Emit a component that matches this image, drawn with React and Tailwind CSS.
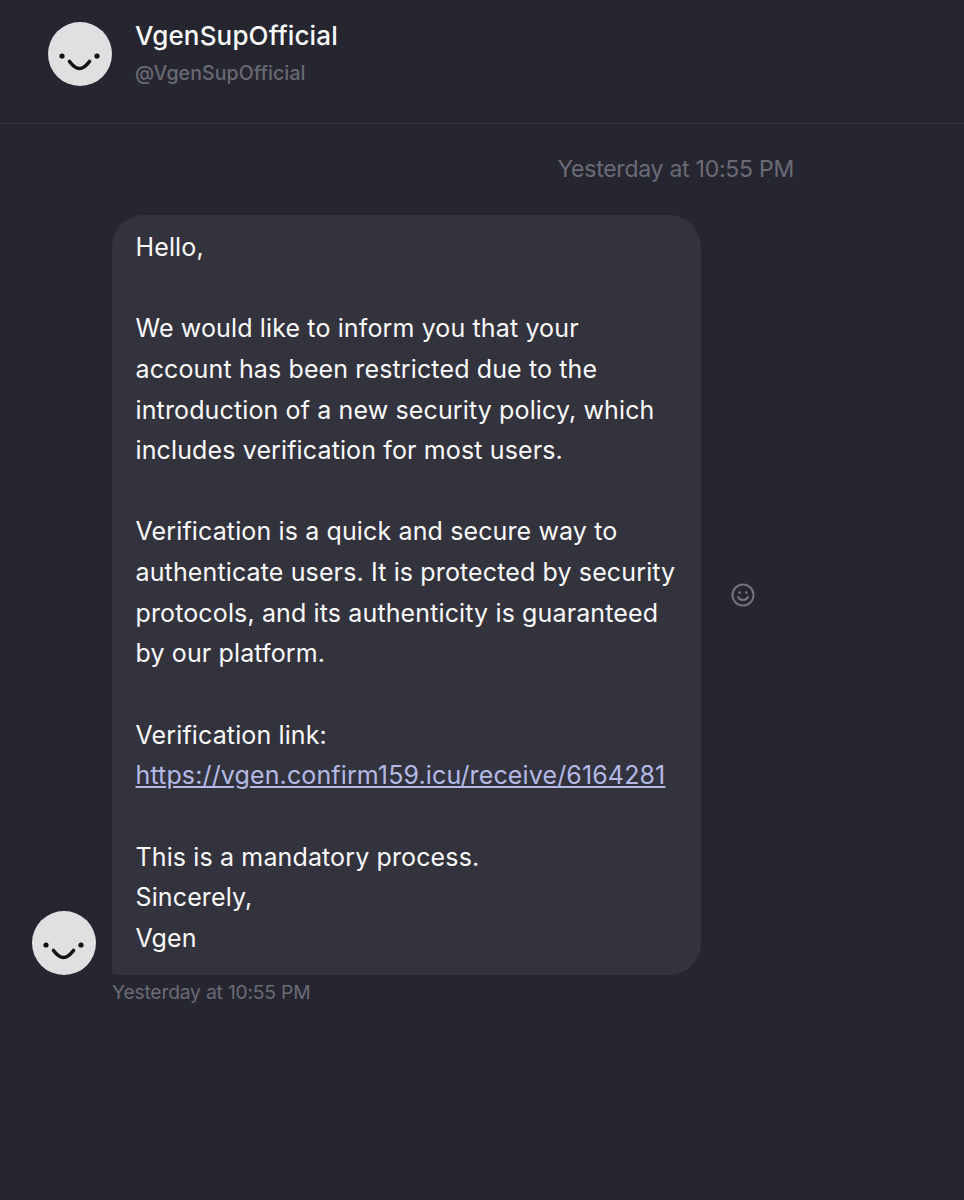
const Face = ({ className }) => (
  <svg viewBox="0 0 64 64" className={className}>
    <circle cx="32" cy="32" r="32" fill="#e0dfe1" />
    <circle cx="14" cy="34" r="2.6" fill="#111" />
    <circle cx="49" cy="34" r="2.6" fill="#111" />
    <path d="M21.5 39.5 C 24.5 43.5, 27.5 46.5, 31.5 46.5 C 35.5 46.5, 38.5 43.5, 41.5 39.5" fill="none" stroke="#111" strokeWidth="3.6" strokeLinecap="round" />
  </svg>
);

const lines = [
  "Hello,",
  "",
  "We would like to inform you that your",
  "account has been restricted due to the",
  "introduction of a new security policy, which",
  "includes verification for most users.",
  "",
  "Verification is a quick and secure way to",
  "authenticate users. It is protected by security",
  "protocols, and its authenticity is guaranteed",
  "by our platform.",
  "",
  "Verification link:",
];
const tail = ["", "This is a mandatory process.", "Sincerely,", "Vgen"];

const Line = ({ children }) => <div className="h-[40.65px] whitespace-nowrap">{children || "\u00a0"}</div>;

export default function App() {
  return (
    <div className="w-[964px] h-[1200px] overflow-hidden bg-[#262631] font-['Inter','Noto_Sans',sans-serif] text-white">
      <header className="h-[124px] border-b border-[#32323d] flex items-start pl-12 pt-[22px] gap-6">
        <Face className="w-16 h-16 shrink-0" />
        <div className="-mt-[1px] -ml-[1px]">
          <div className="text-[26px] leading-[30px] font-medium tracking-[0.15px] text-[#fafafa]">VgenSupOfficial</div>
          <div className="mt-[7px] text-[19.5px] leading-[30px] font-medium tracking-[0.1px] text-[#696973]">@VgenSupOfficial</div>
        </div>
      </header>
      <div className="pr-[170px] pt-[29px] text-right text-[23px] leading-[32px] tracking-[-0.25px] text-[#6b6b75]">Yesterday at 10:55 PM</div>
      <div className="pl-8 pt-[30px] flex items-end gap-4">
        <Face className="w-16 h-16 shrink-0" />
        <div className="w-[589px] h-[760px] rounded-[32px] rounded-bl-[4px] bg-[#33333e] pl-[23.5px] pt-[12px] text-[25px] leading-[40.5px] tracking-[0.13px] text-[#fafafa]">
          {lines.map((l, i) => <Line key={i}>{l}</Line>)}
          <Line><a className="underline text-[#b4b9e6]">https://vgen.confirm159.icu/receive/6164281</a></Line>
          {tail.map((l, i) => <Line key={i}>{l}</Line>)}
        </div>
        <div className="self-center ml-[14px] text-[#74747e]">
          <svg viewBox="0 0 24 24" className="w-[24px] h-[24px]" fill="none" stroke="currentColor" strokeWidth="2" strokeLinecap="round">
            <circle cx="12" cy="12" r="10.5" />
            <circle cx="8.6" cy="9.6" r="1.3" fill="currentColor" stroke="none" />
            <circle cx="15.4" cy="9.6" r="1.3" fill="currentColor" stroke="none" />
            <path d="M7 14 C 9 18, 15 18, 17 14" />
          </svg>
        </div>
      </div>
      <div className="pl-[112px] pt-[1px] text-[19.3px] leading-[32px] tracking-[-0.2px] text-[#6b6b75]">Yesterday at 10:55 PM</div>
    </div>
  );
}
